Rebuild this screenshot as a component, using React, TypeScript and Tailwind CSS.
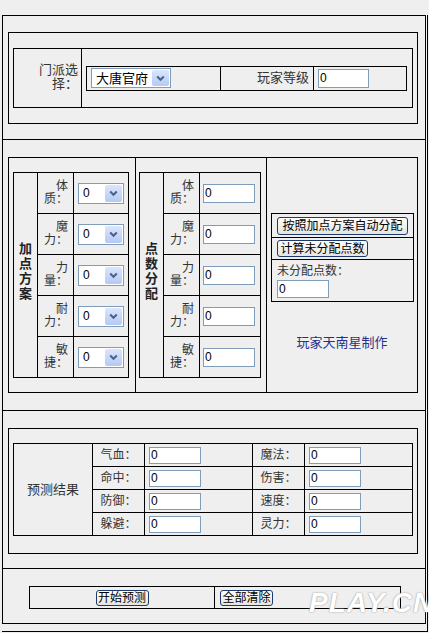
import React from "react";

function XSelect({ value, className }: { value: string; className: string }) {
  return (
    <div className={`flex items-stretch border border-[#7f9db9] bg-white ${className}`}>
      <span className="flex-1 flex items-center pl-[4px] text-black leading-none">{value}</span>
      <span className="w-[17px] my-[1px] mr-[1px] flex items-center justify-center rounded-[2px] bg-[linear-gradient(#dbe6fd,#b4c9f4)]">
        <svg width="9" height="7" viewBox="0 0 9 7">
          <path d="M1.2 1.5 L4.5 4.8 L7.8 1.5" stroke="#4d6185" strokeWidth="2" fill="none" />
        </svg>
      </span>
    </div>
  );
}

function XInput({ className }: { className: string }) {
  return (
    <div
      className={`border border-[#7f9db9] bg-white flex items-center pl-[1px] text-black text-[12px] leading-none ${className}`}
    >
      0
    </div>
  );
}

function XButton({ children, className }: { children: React.ReactNode; className: string }) {
  return (
    <div
      className={`border border-[#1c3a6b] rounded-[3px] bg-[linear-gradient(#ffffff,#e4e4e0)] flex items-center justify-center leading-none text-black text-[12px] whitespace-nowrap ${className}`}
    >
      {children}
    </div>
  );
}

const leftRows = [
  ["体", "质："],
  ["魔", "力："],
  ["力", "量："],
  ["耐", "力："],
  ["敏", "捷："],
];

const resultRows = [
  ["气血：", "魔法："],
  ["命中：", "伤害："],
  ["防御：", "速度："],
  ["躲避：", "灵力："],
];

function AttrTable({ title, kind }: { title: string[]; kind: "select" | "input" }) {
  return (
    <div className={`h-[206px] border border-black flex ${kind === "select" ? "w-[116px]" : "w-[122px]"}`}>
      <div className="w-[24px] border-r border-black flex items-center justify-center pb-[9px]">
        <span className="font-bold text-[13px] leading-[15px] text-[#222] text-center">
          {title.map((t, i) => (
            <React.Fragment key={i}>
              {t}
              {i < title.length - 1 && <br />}
            </React.Fragment>
          ))}
        </span>
      </div>
      <div className="flex-1 flex flex-col">
        {leftRows.map((r, i) => (
          <div key={i} className={`flex ${i < 4 ? "h-[41px] border-b border-black" : "flex-1"}`}>
            <div className="w-[36px] border-r border-black flex items-center justify-end pr-[5px]">
              <span className="text-right leading-[13px]">
                {r[0]}
                <br />
                {r[1]}
              </span>
            </div>
            {kind === "select" ? (
              <div className="flex-1 flex items-center pl-[4px]">
                <XSelect value="0" className="w-[46px] h-[21px] text-[12px]" />
              </div>
            ) : (
              <div className="flex-1 flex items-center pl-[3px]">
                <XInput className="w-[52px] h-[19px]" />
              </div>
            )}
          </div>
        ))}
      </div>
    </div>
  );
}

export default function App() {
  return (
    <div className="w-[429px] h-[633px] bg-[#efefef] relative overflow-hidden font-['Liberation_Sans','Noto_Sans_CJK_SC',sans-serif] text-[12px] text-[#333]">
      <div className="ml-[2px] mt-[15px] w-[426px] h-[617px] border-r border-b border-black">
        <div className="w-[424px] border border-black flex flex-col">
          {/* Section 1 */}
          <div className="h-[123px] pl-[5px] pt-[16px]">
            <div className="w-[410px] h-[92px] border border-black pl-[4px] pt-[15px]">
              <div className="w-[400px] h-[60px] border border-black flex">
                <div className="w-[68px] border-r border-black flex items-center justify-end pr-[3px] pb-[2px]">
                  <span className="text-right text-[13px] leading-[14px]">
                    门派选
                    <br />
                    择：
                  </span>
                </div>
                <div className="flex-1 flex items-center pl-[4px]">
                  <div className="w-[321px] h-[25px] border border-black flex">
                    <div className="w-[134px] border-r border-black flex items-center pl-[4px]">
                      <XSelect value="大唐官府" className="w-[80px] h-[20px] text-[13px]" />
                    </div>
                    <div className="w-[93px] border-r border-black flex items-center justify-end pr-[4px] text-[13px]">
                      玩家等级
                    </div>
                    <div className="flex-1 flex items-center pl-[4px]">
                      <XInput className="w-[51px] h-[19px]" />
                    </div>
                  </div>
                </div>
              </div>
            </div>
          </div>

          {/* Section 2 */}
          <div className="h-[271px] border-t border-black pl-[5px] pt-[17px]">
            <div className="w-[410px] h-[236px] border border-black flex">
              <div className="w-[127px] border-r border-black flex items-center pl-[4px]">
                <AttrTable title={["加", "点", "方", "案"]} kind="select" />
              </div>
              <div className="w-[131px] border-r border-black flex items-center pl-[3px]">
                <AttrTable title={["点", "数", "分", "配"]} kind="input" />
              </div>
              <div className="flex-1 flex flex-col pt-[55px]">
                <div className="pl-[4px]">
                  <div className="w-[143px] border border-black flex flex-col">
                    <div className="h-[24px] border-b border-black flex items-center pl-[5px]">
                      <XButton className="w-[131px] h-[18px]">按照加点方案自动分配</XButton>
                    </div>
                    <div className="h-[22px] border-b border-black flex items-center pl-[5px]">
                      <XButton className="w-[91px] h-[17px]">计算未分配点数</XButton>
                    </div>
                    <div className="h-[41px] pl-[5px] pt-[4px] flex flex-col">
                      <span className="leading-[15px]">未分配点数：</span>
                      <XInput className="w-[52px] h-[18px] mt-[1px]" />
                    </div>
                  </div>
                </div>
                <div className="mt-[33px] text-center text-[13px] leading-[15px] text-[#26318c]">玩家天南星制作</div>
              </div>
            </div>
          </div>

          {/* Section 3 */}
          <div className="h-[158px] border-t border-black pl-[5px] pt-[17px]">
            <div className="w-[410px] h-[126px] border border-black pl-[4px] pt-[14px]">
              <div className="w-[400px] h-[93px] border border-black flex">
                <div className="w-[79px] border-r border-black flex items-center justify-center text-[13px]">
                  预测结果
                </div>
                <div className="flex-1 flex flex-col">
                  {resultRows.map((r, i) => (
                    <div key={i} className={`flex ${i < 3 ? "h-[23px] border-b border-black" : "flex-1"}`}>
                      <div className="w-[52px] border-r border-black flex items-center justify-center">{r[0]}</div>
                      <div className="w-[108px] border-r border-black flex items-center pl-[4px]">
                        <XInput className="w-[52px] h-[17px]" />
                      </div>
                      <div className="w-[52px] border-r border-black flex items-center justify-center">{r[1]}</div>
                      <div className="flex-1 flex items-center pl-[4px]">
                        <XInput className="w-[52px] h-[17px]" />
                      </div>
                    </div>
                  ))}
                </div>
              </div>
            </div>
          </div>

          {/* Section 4 */}
          <div className="h-[55px] border-t border-black pl-[26px] pt-[17px]">
            <div className="w-[372px] h-[23px] border border-black flex">
              <div className="w-[185px] border-r border-black flex items-center justify-center">
                <XButton className="w-[53px] h-[16px]">开始预测</XButton>
              </div>
              <div className="flex-1 flex items-center pl-[5px]">
                <XButton className="w-[53px] h-[16px]">全部清除</XButton>
              </div>
            </div>
          </div>
        </div>
      </div>

      <div className="absolute left-[309px] top-[589px] text-[28px] leading-none italic font-bold tracking-[1px] text-white whitespace-nowrap [text-shadow:0_0_1px_#9a9a9a,0_0_2px_#b0b0b0]">
        PLAY.CN
      </div>
    </div>
  );
}
